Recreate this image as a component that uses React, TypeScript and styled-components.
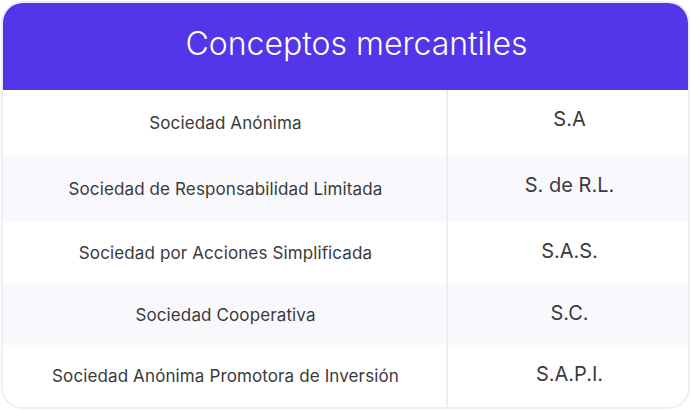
import React from 'react'
import styled, { createGlobalStyle } from 'styled-components'

const variables = {
    purple: '#5335ea',
    border: '#eeeeee',
    stripe: '#f9f9fd',
    text: '#3a3a3a'
};

const GlobalStyle = createGlobalStyle`
  html, body {
    margin: 0;
    padding: 0;
    background: #ffffff;
    font-family: Inter, "Noto Sans", sans-serif;
  }
`;

const Page = styled.div`
  padding: 1px;
`;

const Card = styled.div`
  width: 689px;
  box-sizing: border-box;
  border: 2px solid ${variables.border};
  border-radius: 22px;
  overflow: hidden;
  background: #ffffff;
`;

const Header = styled.div`
  height: 87px;
  background: ${variables.purple};
  display: flex;
  align-items: center;
  justify-content: center;
  padding: 0 0 6px 22px;
  box-sizing: border-box;
`;

const Title = styled.h1`
  margin: 0;
  font-size: 32px;
  font-weight: 300;
  color: #ffffff;
`;

const Row = styled.div<{ $striped: boolean; $height: number }>`
  display: grid;
  grid-template-columns: 443px 1fr;
  height: ${p => p.$height}px;
  background: ${p => (p.$striped ? variables.stripe : '#ffffff')};
`;

const NameCell = styled.div`
  display: flex;
  align-items: center;
  justify-content: center;
  font-size: 17px;
  letter-spacing: 0.12px;
  color: ${variables.text};
  padding-left: 2px;
`;

const AbbrCell = styled.div`
  display: flex;
  align-items: flex-start;
  justify-content: center;
  border-left: 2px solid ${variables.border};
  font-size: 20px;
  color: ${variables.text};
  padding: 17px 0 0 3px;
`;

interface IConcept {
    name: string;
    abbr: string;
    height: number;
}

const concepts: IConcept[] = [
    {name: 'Sociedad Anónima', abbr: 'S.A', height: 66},
    {name: 'Sociedad de Responsabilidad Limitada', abbr: 'S. de R.L.', height: 66},
    {name: 'Sociedad por Acciones Simplificada', abbr: 'S.A.S.', height: 62},
    {name: 'Sociedad Cooperativa', abbr: 'S.C.', height: 61},
    {name: 'Sociedad Anónima Promotora de Inversión', abbr: 'S.A.P.I.', height: 62}
];

const App: React.FC = () => {
    return (
        <Page>
            <GlobalStyle />
            <Card>
                <Header>
                    <Title>Conceptos mercantiles</Title>
                </Header>
                {concepts.map((c, i) => (
                    <Row key={c.abbr} $striped={i % 2 === 1} $height={c.height}>
                        <NameCell>{c.name}</NameCell>
                        <AbbrCell>{c.abbr}</AbbrCell>
                    </Row>
                ))}
            </Card>
        </Page>
    )
};

export default App
